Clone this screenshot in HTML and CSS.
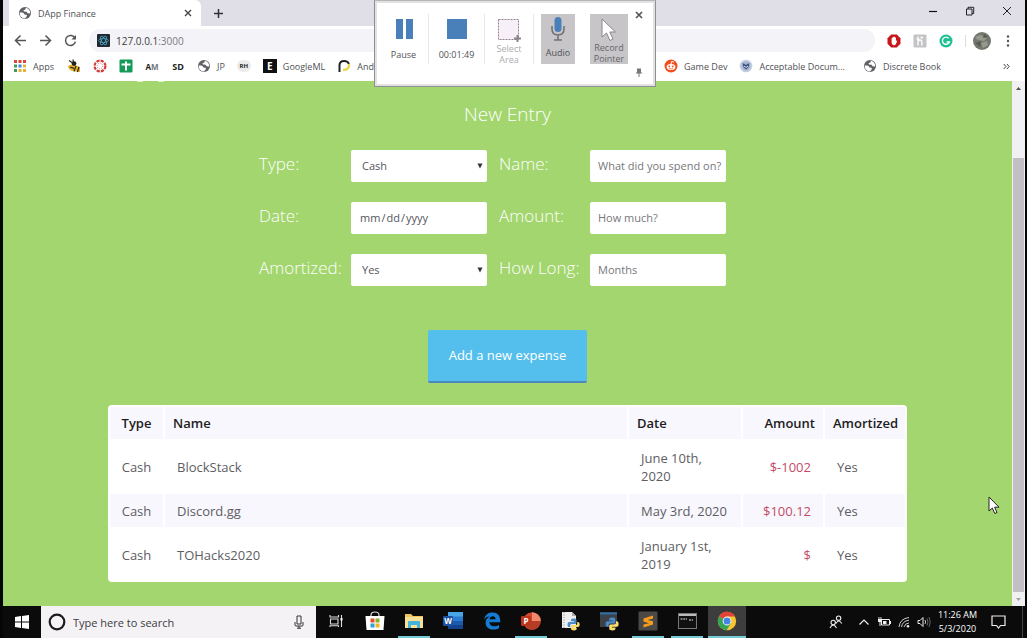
FILE: index.html
```html
<!DOCTYPE html>
<html lang="en">
<head>
    <meta charset="UTF-8">
    <meta name="viewport" content="width=device-width, initial-scale=1">
    <title>DApp Finance</title>
    <link rel="stylesheet" href="styles.css">
</head>
<body>
    <svg class="defs" width="0" height="0">
        <symbol id="globe" viewBox="0 0 14 14">
            <circle cx="7" cy="7" r="6" fill="#5f6166"/>
            <path d="M1.8 6.4 L4.4 6.6 Q6.2 7 6.4 8.6 L8.4 8.8 Q9.4 9.4 8.6 10.6 L7 12.4 C3.6 12.2 1.4 9.6 1.8 6.4Z M7.8 1.8 L7.4 3.4 L5.4 4.2 L6 5.6 L8.6 5.8 L9.6 7.2 L12.2 7.4 C12.4 4.6 10.4 2.2 7.8 1.8Z" fill="#fff"/>
        </symbol>
        <symbol id="python" viewBox="0 0 12 12">
            <path d="M6 0.5 C3.6 .5 3.6 1.6 3.6 3 H6.4 V3.6 H2 C0 3.6 0 8.4 2 8.4 H3 V7 C3 5.8 4 5.6 5 5.6 H7.6 C8.4 5.6 8.8 5 8.8 4 V2 C8.8 .8 7.6 .5 6 .5Z" fill="#4a8cc9"/>
            <path d="M6.4 11.5 C8.8 11.5 9 10.6 9 9 H6 V8.4 H10.2 C12.2 8.4 12.2 3.6 10.2 3.6 H9.4 V5 C9.4 6 8.6 6.4 7.6 6.4 H5 C4 6.4 3.6 7 3.6 8 V9.8 C3.6 11 4.8 11.5 6.4 11.5Z" fill="#fadb6a"/>
        </symbol>
    </svg>

    <div class="desktop">
        <header class="tab-bar">
            <div class="tab">
                <svg width="14" height="14"><use href="#globe"/></svg>
                <span class="tab-title">DApp Finance</span>
                <button class="plain" aria-label="Close tab"><svg width="8" height="8" viewBox="0 0 8 8"><path d="M1 1 L7 7 M7 1 L1 7" stroke="#444" stroke-width="1.4"/></svg></button>
            </div>
            <button class="plain new-tab" aria-label="New tab"><svg width="11" height="11" viewBox="0 0 11 11"><path d="M5.5 1 V10 M1 5.5 H10" stroke="#333" stroke-width="1.5"/></svg></button>
            <div class="window-buttons">
                <button class="plain" aria-label="Minimize"><svg width="10" height="10" viewBox="0 0 10 10"><path d="M1 5.5 H9" stroke="#111" stroke-width="1.2"/></svg></button>
                <button class="plain" aria-label="Restore"><svg width="10" height="10" viewBox="0 0 10 10"><path d="M1.5 3 H7 V9 H1.5Z M3 3 V1.3 H8.7 V7.5 H7" fill="none" stroke="#222"/></svg></button>
                <button class="plain" aria-label="Close"><svg width="10" height="10" viewBox="0 0 10 10"><path d="M1 1 L9 9 M9 1 L1 9" stroke="#222"/></svg></button>
            </div>
        </header>

        <div class="toolbar">
            <button class="plain" aria-label="Back"><svg width="13" height="13" viewBox="0 0 13 13"><path d="M12 6.5 H2 M6.5 1.5 L1.5 6.5 L6.5 11.5" fill="none" stroke="#555" stroke-width="1.5"/></svg></button>
            <button class="plain" aria-label="Forward"><svg width="13" height="13" viewBox="0 0 13 13"><path d="M1 6.5 H11 M6.5 1.5 L11.5 6.5 L6.5 11.5" fill="none" stroke="#555" stroke-width="1.5"/></svg></button>
            <button class="plain" aria-label="Reload"><svg width="13" height="13" viewBox="0 0 13 13"><path d="M11 4.2 A5 5 0 1 0 11.4 7.6" fill="none" stroke="#555" stroke-width="1.5"/><path d="M12 1 V5.6 H7.4Z" fill="#555"/></svg></button>
            <div class="omnibox">
                <svg width="13" height="13" viewBox="0 0 13 13"><rect width="13" height="13" rx="1" fill="#20252e"/><g fill="none" stroke="#4fb4d3" stroke-width=".7"><ellipse cx="6.5" cy="6.5" rx="5" ry="2"/><ellipse cx="6.5" cy="6.5" rx="5" ry="2" transform="rotate(60 6.5 6.5)"/><ellipse cx="6.5" cy="6.5" rx="5" ry="2" transform="rotate(120 6.5 6.5)"/></g></svg>
                <span>127.0.0.1<span class="port">:3000</span></span>
            </div>
            <div class="extensions">
                <svg width="14" height="14" viewBox="0 0 14 14"><path d="M4.2 .5 H9.8 L13.5 4.2 V9.8 L9.8 13.5 H4.2 L.5 9.8 V4.2Z" fill="#c8161d"/><path d="M4.6 6.8 V4.4 Q5 3.8 5.5 4.4 V3.2 Q6 2.6 6.6 3.2 V2.8 Q7.2 2.2 7.7 2.9 V3.6 Q8.4 3 8.9 3.8 V7 L9.8 6.4 Q10.4 6.6 10 7.4 L8.8 10.2 Q8 11.4 6.6 11.2 Q4.6 11 4.6 8.6Z" fill="#fff"/></svg>
                <svg width="14" height="14" viewBox="0 0 14 14"><rect x=".5" y=".5" width="13" height="13" rx="1" fill="#c4c3c6"/><path d="M5 2.5 V11.5 M5 7.5 Q5.6 6 7.2 6 Q8.8 6 8.8 8 V11.5 M3.6 5 H6.4 M8.6 2.6 V4.6 M7.6 3.6 H10" fill="none" stroke="#fff" stroke-width="1.3"/></svg>
                <svg width="14" height="14" viewBox="0 0 14 14"><circle cx="7" cy="7" r="6.5" fill="#1fbf94"/><path d="M9.8 4.4 A3.6 3.6 0 1 0 10.4 8 H7.6" fill="none" stroke="#fff" stroke-width="1.4"/></svg>
                <i class="divider"></i>
                <svg width="18" height="18" viewBox="0 0 18 18"><circle cx="9" cy="9" r="9" fill="#74776d"/><path d="M2 6 Q6 1 10 4 L14 6 L11 9 L5 8Z M8 11 L14 9 L15 13 L10 16Z" fill="#96998e"/><path d="M2 11 L8 9 L7 15Z M11 2 L15 5 L10 6Z" fill="#575c53"/></svg>
                <svg width="4" height="14" viewBox="0 0 4 14" fill="#555"><circle cx="2" cy="2.5" r="1.2"/><circle cx="2" cy="7" r="1.2"/><circle cx="2" cy="11.5" r="1.2"/></svg>
            </div>
        </div>

        <nav class="bookmarks">
            <a href="#" class="apps"><svg width="12" height="12" viewBox="0 0 12 12"><path d="M0 0h3v3h-3z M4.5 0h3v3h-3z M9 0h3v3h-3z" fill="#d9473c"/><path d="M0 4.5h3v3h-3z" fill="#3f9a57"/><path d="M4.5 4.5h3v3h-3z" fill="#4285d8"/><path d="M9 4.5h3v3h-3z M4.5 9h3v3h-3z M9 9h3v3h-3z" fill="#e5b53b"/><path d="M0 9h3v3h-3z" fill="#3f9a57"/></svg>Apps</a>
            <a href="#" aria-label="Bee"><svg width="14" height="14" viewBox="0 0 14 14"><path d="M1 7 Q4 4.5 8 6 L13 8 L13 13 L5 12 Q1 10 1 7Z" fill="#e5b52c"/><path d="M2 1.5 L5 3.4 M6 .5 L6.4 3 M3 8 L7 9.4 M9 7 L7 12.4 M12 8 L10.4 13" fill="none" stroke="#26221a" stroke-width="1.2"/><circle cx="7" cy="4.6" r="2.4" fill="#26221a"/></svg></a>
            <a href="#" aria-label="Canvas"><svg width="14" height="14" viewBox="0 0 14 14"><circle cx="7" cy="7" r="5.4" fill="none" stroke="#cf3d3d" stroke-width="2.2" stroke-dasharray="3.2 1.04"/><circle cx="7" cy="7" r="2.8" fill="none" stroke="#cf3d3d" stroke-width=".8" stroke-dasharray=".9 1.3"/></svg></a>
            <a href="#" aria-label="Sheets"><svg width="14" height="14" viewBox="0 0 14 14"><rect x=".5" y=".5" width="13" height="13" rx="1" fill="#159b57"/><path d="M7 2.5 V11.5 M2.5 5.5 H11.5" stroke="#fff" stroke-width="2"/></svg></a>
            <a href="#" class="letters am">A<span>M</span></a>
            <a href="#" class="letters sd">SD</a>
            <a href="#"><svg width="14" height="14"><use href="#globe"/></svg>JP</a>
            <a href="#" class="letters rh">RH</a>
            <a href="#"><span class="e-logo">E</span>GoogleML</a>
            <a href="#"><svg width="14" height="14" viewBox="0 0 14 14"><path d="M2.5 13 V6 Q2.8 2 7 2 Q11 2 11.8 5" fill="none" stroke="#222" stroke-width="2"/><path d="M12 5 Q12.6 10.6 6 11" fill="none" stroke="#ead84b" stroke-width="2.4"/></svg>Android</a>
            <div class="bookmarks-right">
                <a href="#"><svg width="14" height="14" viewBox="0 0 14 14"><circle cx="7" cy="7" r="6.5" fill="#f24d1c"/><ellipse cx="7" cy="8" rx="4.4" ry="3" fill="#fff"/><circle cx="5.3" cy="7.4" r=".9" fill="#f24d1c"/><circle cx="8.7" cy="7.4" r=".9" fill="#f24d1c"/><path d="M7 5 L7.6 2.5 L10 3" fill="none" stroke="#fff"/><path d="M5.2 9.3 Q7 10.6 8.8 9.3" fill="none" stroke="#f24d1c" stroke-width=".7"/></svg>Game Dev</a>
                <a href="#"><svg width="14" height="14" viewBox="0 0 14 14"><circle cx="7" cy="7" r="6.3" fill="#c3cde0"/><circle cx="7" cy="7" r="4.4" fill="#a3b2cf"/><path d="M3.5 4 L7 6 L10.5 4 L9.5 8 L7 10.5 L4.5 8Z" fill="#35507c"/><path d="M5 7 L7 8.5 L9 7" fill="none" stroke="#dfe5f0"/></svg>Acceptable Docum...</a>
                <a href="#" class="discrete"><svg width="14" height="14"><use href="#globe"/></svg>Discrete Book</a>
                <button class="plain" aria-label="More bookmarks"><svg width="7" height="7" viewBox="0 0 7 7"><path d="M.7 1 L3 3.5 L.7 6 M3.9 1 L6.2 3.5 L3.9 6" fill="none" stroke="#444"/></svg></button>
            </div>
        </nav>

        <div class="viewport">
            <main class="page">
                <div class="scrolled-line"><i></i><i></i></div>
                <h1>New Entry</h1>
                <form>
                    <div class="fields">
                        <label for="type">Type:</label>
                        <select id="type"><option>Cash</option><option>Credit</option></select>
                        <label for="name">Name:</label>
                        <input id="name" type="text" placeholder="What did you spend on?">
                        <label for="date">Date:</label>
                        <input id="date" type="date">
                        <label for="amount">Amount:</label>
                        <input id="amount" type="text" placeholder="How much?">
                        <label for="amortized">Amortized:</label>
                        <select id="amortized"><option>Yes</option><option>No</option></select>
                        <label for="months">How Long:</label>
                        <input id="months" type="text" placeholder="Months">
                    </div>
                    <button type="button" class="add">Add a new expense</button>
                </form>
                <table>
                    <thead>
                        <tr>
                            <th class="type">Type</th>
                            <th class="name">Name</th>
                            <th class="date">Date</th>
                            <th class="amount">Amount</th>
                            <th class="amortized">Amortized</th>
                        </tr>
                    </thead>
                    <tbody>
                        <tr><td class="type">Cash</td><td>BlockStack</td><td>June 10th, 2020</td><td class="amount">$-1002</td><td>Yes</td></tr>
                        <tr><td class="type">Cash</td><td>Discord.gg</td><td>May 3rd, 2020</td><td class="amount">$100.12</td><td>Yes</td></tr>
                        <tr><td class="type">Cash</td><td>TOHacks2020</td><td>January 1st, 2019</td><td class="amount">$</td><td>Yes</td></tr>
                    </tbody>
                </table>
            </main>
            <div class="scrollbar">
                <svg width="13" height="15" viewBox="0 0 13 15"><path d="M4 9 L6.5 6 L9 9Z" fill="#505050"/></svg>
                <div class="track"><div class="thumb"></div></div>
                <svg width="13" height="14" viewBox="0 0 13 14"><path d="M4 6 H9 L6.5 9Z" fill="#a3a3a3"/></svg>
            </div>
        </div>

        <footer class="taskbar">
            <button class="plain start" aria-label="Start"><svg width="14" height="14" viewBox="0 0 14 14"><path d="M0 2 L6 1 V6.5 H0Z M7 .9 L14 0 V6.5 H7Z M0 7.4 H6 V13 L0 12Z M7 7.4 H14 V14 L7 13.1Z" fill="#fff"/></svg></button>
            <div class="search">
                <svg width="18" height="18" viewBox="0 0 18 18"><circle cx="9" cy="9" r="7.3" fill="none" stroke="#1b1b1b" stroke-width="2.2"/></svg>
                <input type="text" aria-label="Search" placeholder="Type here to search">
                <svg width="10" height="14" viewBox="0 0 10 14"><path d="M3 1 H7 V9 H3Z M1 7 V10 Q1 11 2 11 H8 Q9 11 9 10 V7 M5 11 V13.5 M3 13.2 H7" fill="none" stroke="#333"/></svg>
            </div>
            <div class="tasks">
                <button class="plain" aria-label="Task view"><svg width="14" height="14" viewBox="0 0 14 14"><path d="M1 1 V3 H9.5 V1 M1.5 5 H9 V10 H1.5Z M1 13 V11.8 H9.5 V13 M12.5 1 V13" fill="none" stroke="#ddd" stroke-width="1.1"/><path d="M11.5 4 H13.5 V6.5 H11.5Z" fill="#fff"/></svg></button>
                <button class="plain" aria-label="Store"><svg width="20" height="20" viewBox="0 0 20 20"><path d="M6 6 V4 Q6 1 10 1 Q14 1 14 4 V6" fill="none" stroke="#ddd" stroke-width="1.2"/><path d="M.5 5 H19.5 L18.5 19 H1.5Z" fill="#fff"/><path d="M5.5 7.5 h4v4h-4z" fill="#e74c2c"/><path d="M10.5 7.5 h4v4h-4z" fill="#7db52c"/><path d="M5.5 12.5 h4v4h-4z" fill="#28a3dd"/><path d="M10.5 12.5 h4v4h-4z" fill="#f5b61f"/></svg></button>
                <button class="plain open" aria-label="Explorer"><svg width="20" height="20" viewBox="0 0 20 20"><path d="M1 3 H7 L9 5 H19 V17 H1Z" fill="#eec65d"/><path d="M1 6 H19 V17 H1Z" fill="#fae096"/><path d="M4 17 V11 Q4 10 5 10 H15 Q16 10 16 11 V17 H13 V14 H7 V17Z" fill="#46b3dc"/></svg></button>
                <button class="plain" aria-label="Word"><svg width="20" height="20" viewBox="0 0 20 20"><rect x="5" y="1" width="15" height="17" rx="1" fill="#2d7bd0"/><path d="M5 1 H20 V5.5 H5Z" fill="#46a6e8"/><path d="M5 10 H20 V14 H5Z" fill="#1b59ad"/><path d="M5 14 H20 V18 H5Z" fill="#15428c"/><rect y="5" width="10" height="10" rx="1" fill="#1c50a0"/><text x="5" y="13" class="logo-letter">W</text></svg></button>
                <button class="plain" aria-label="Edge"><svg width="18" height="18" viewBox="0 0 18 18"><path d="M1 8 C2 2 6 .5 9.5 .5 C14.5 .5 17.2 4 17.2 8 V10.2 H6.4 C6.5 13 8.6 14.2 11 14.2 C13 14.2 14.6 13.7 16 12.9 V16.3 C14.4 17.2 12.6 17.6 10.6 17.6 C5.6 17.6 2.6 14.8 2.6 10.7 C2.6 7.8 4.4 5.4 6.7 4.6 C4.2 4.5 2.2 5.7 1 8Z M6.5 7.3 H12.6 C12.5 5.2 11.5 4.2 9.8 4.2 C8 4.2 6.9 5.4 6.5 7.3Z" fill="#147bd1" fill-rule="evenodd"/></svg></button>
                <button class="plain open" aria-label="PowerPoint"><svg width="20" height="20" viewBox="0 0 20 20"><circle cx="11" cy="10" r="8.7" fill="#d14a30"/><path d="M11 1.3 A8.7 8.7 0 0 1 19.7 10 H11Z" fill="#f1886b"/><path d="M3.4 14.3 A8.7 8.7 0 0 0 19.7 10 H11Z" fill="#b53d27"/><rect y="5" width="10" height="10" rx="1" fill="#bb351c"/><text x="5" y="13" class="logo-letter">P</text></svg></button>
                <button class="plain" aria-label="Python file"><svg width="20" height="20" viewBox="0 0 20 20"><path d="M2 1 H12 L16 5 V17 H2Z" fill="#eee"/><path d="M4 1 V17" stroke="#888" stroke-dasharray="1 1.5"/><path d="M12 1 L16 5 H12Z" fill="#aaa"/><use href="#python" x="7" y="7" width="13" height="13"/></svg></button>
                <button class="plain" aria-label="Python console"><svg width="20" height="20" viewBox="0 0 20 20"><rect x="1" y="1" width="17" height="15" fill="#3c4147"/><path d="M1 2.5 H18" stroke="#2f6fa7" stroke-width="2"/><use href="#python" x="6" y="6" width="14" height="14"/></svg></button>
                <button class="plain open" aria-label="Sublime Text"><svg width="20" height="20" viewBox="0 0 20 20"><rect x=".5" y=".5" width="19" height="19" rx="1" fill="#4b4947"/><path d="M15 4.5 L5.5 7.4 V10.6 L11 12.2 L5.5 13.5 V16.6 L15 13.5 V10.3 L9.6 8.9 L15 7.5Z" fill="#f79b1d"/></svg></button>
                <button class="plain open" aria-label="Command Prompt"><svg width="19" height="16" viewBox="0 0 19 16"><rect x=".5" y=".5" width="18" height="15" fill="#111" stroke="#777"/><path d="M1 2 H18" stroke="#bbb" stroke-width="2"/><path d="M2.5 6 H9 M11 7 H15" stroke="#ddd" stroke-width="1.2" stroke-dasharray="2 .7"/></svg></button>
                <button class="plain open current" aria-label="Chrome"><svg width="20" height="20" viewBox="0 0 20 20"><circle cx="10" cy="10" r="9.2" fill="#f7c630"/><path d="M10 10 L2 5.4 A9.2 9.2 0 0 1 18 5.4 H10Z" fill="#e14436"/><path d="M10 10 L2 5.4 A9.2 9.2 0 0 0 9.6 19.2 L14 12Z" fill="#36a454"/><circle cx="10" cy="10" r="4.4" fill="#fff"/><circle cx="10" cy="10" r="3.5" fill="#4384e8"/></svg></button>
            </div>
            <div class="tray">
                <svg class="people" width="14" height="14" viewBox="0 0 14 14"><g fill="none" stroke="#eee" stroke-width="1.1"><circle cx="9.6" cy="3.2" r="2.2"/><path d="M7 8.5 Q9.6 3.5 12.8 8.5"/><circle cx="4.2" cy="7.5" r="2.2"/><path d="M1 13 Q4.2 7 7.5 13"/></g></svg>
                <svg width="12" height="12" viewBox="0 0 12 12"><path d="M1.5 8.5 L6 4 L10.5 8.5" fill="none" stroke="#eee" stroke-width="1.2"/></svg>
                <svg width="14" height="12" viewBox="0 0 14 12"><path d="M4.5 3.5 H12.5 V9 H4.5Z" fill="none" stroke="#eee"/><path d="M6 5 H9.5 V8 H6Z M13 5 H14 V8 H13Z M1 3 H5 V6 H1Z M1.5 1 H2.4 V3 H1.5Z M3.5 1 H4.4 V3 H3.5Z" fill="#eee"/><path d="M3 6 V10" stroke="#eee"/></svg>
                <svg width="12" height="12" viewBox="0 0 12 12"><g fill="none" stroke="#ccc"><path d="M1 11 Q2 2.5 11 1.5"/><path d="M3.5 11 Q4.3 5 11 4.2"/><path d="M6 11 Q6.8 7.4 11 7"/></g><circle cx="10" cy="10.2" r="1.3" fill="#eee"/></svg>
                <svg width="14" height="12" viewBox="0 0 14 12"><path d="M1 4.5 H3 L6 1.5 V10.5 L3 7.5 H1Z" fill="none" stroke="#eee"/><path d="M8 4 Q9.2 6 8 8" fill="none" stroke="#ccc"/><path d="M10 2.5 Q12 6 10 9.5 M12 1 Q14.6 6 12 11" fill="none" stroke="#666"/></svg>
                <div class="clock"><span>11:26 AM</span><span>5/3/2020</span></div>
                <svg width="15" height="14" viewBox="0 0 15 14"><path d="M1 1 H14 V10.5 H9.5 L7.5 13 L5.5 10.5 H1Z" fill="none" stroke="#eee" stroke-width="1.2"/></svg>
                <i class="peek"></i>
            </div>
        </footer>
    </div>

    <!-- screen recorder docked over the browser -->
    <div class="recorder">
        <button class="plain pause"><svg width="20" height="22" viewBox="0 0 20 22"><path d="M2 1 H9 V21 H2Z M12 1 H19 V21 H12Z" fill="#4a80ba"/></svg>Pause</button>
        <button class="plain stop"><svg width="22" height="22" viewBox="0 0 22 22"><path d="M1 1 H21 V21 H1Z" fill="#4a80ba"/></svg>00:01:49</button>
        <button class="plain area"><svg width="24" height="24" viewBox="0 0 24 24"><rect x="1.5" y="1.5" width="20" height="20" fill="#f8f0f9" stroke="#94838f" stroke-dasharray="2 1"/><path d="M20.5 17 V24 M17 20.5 H24" stroke="#8a858a" stroke-width="2"/></svg>Select<br>Area</button>
        <button class="plain audio"><svg width="16" height="26" viewBox="0 0 16 26"><rect x="4.5" y="1" width="7" height="15" rx="3.5" fill="#4a80ba"/><path d="M2 10 V13 Q2 19 8 19 Q14 19 14 13 V10 M8 19 V24 M4 24 H12" fill="none" stroke="#707378" stroke-width="1.6"/></svg>Audio</button>
        <button class="plain pointer"><svg width="18" height="24" viewBox="0 0 18 24"><path d="M2 1 V19 L6.5 15 L10 22.5 L13 21 L9.8 14 H15.5Z" fill="#fff" stroke="#888"/></svg>Record<br>Pointer</button>
        <div class="recorder-side">
            <button class="plain" aria-label="Close recorder"><svg width="8" height="8" viewBox="0 0 8 8"><path d="M1 1 L7 7 M7 1 L1 7" stroke="#555" stroke-width="1.7"/></svg></button>
            <button class="plain" aria-label="Pin"><svg width="8" height="9" viewBox="0 0 8 9"><path d="M2 .5 H6 V4 L7.5 5.5 H.5 L2 4Z" fill="#777"/><path d="M4 5 V9" stroke="#777"/></svg></button>
        </div>
    </div>

    <svg class="cursor" width="12" height="19" viewBox="0 0 12 19"><path d="M1 1 V15 L4.3 12 L6.8 17.5 L9 16.5 L6.6 11.2 H11Z" fill="#fff" stroke="#222"/></svg>
</body>
</html>
```
FILE: styles.css
```css
* {
    box-sizing: border-box;
}

body {
    margin: 0;
    padding-bottom: 6px;
    height: 100vh;
    background: white;
    font-family: "Open Sans", "Noto Sans", sans-serif;
    font-size: 9px;
    color: #505156;
    overflow: hidden;
}

svg {
    display: block;
    flex: none;
}

.defs {
    position: absolute;
}

.plain {
    border: none;
    padding: 0;
    background: none;
    font: inherit;
    color: inherit;
}

.desktop {
    height: 100%;
    padding: 0 2px 0 3px;
    background: #060606;
    display: flex;
    flex-direction: column;
}

/* browser chrome */
.tab-bar {
    height: 26px;
    background: #e0dee7;
    display: flex;
    align-items: center;
    padding: 0 13px 0 6px;
}

.tab {
    width: 192px;
    height: 26px;
    background: white;
    border-radius: 0 6px 0 0;
    display: flex;
    align-items: center;
    gap: 6px;
    padding: 0 9px;
}

.tab-title {
    flex: 1;
}

.new-tab {
    margin-left: 12px;
}

.window-buttons {
    margin-left: auto;
    display: flex;
    gap: 27px;
    padding-bottom: 5px;
}

.toolbar {
    height: 29px;
    background: white;
    display: flex;
    align-items: center;
    gap: 12px;
    padding: 0 15px 0 11px;
}

.omnibox {
    flex: 1;
    height: 23px;
    border-radius: 12px;
    background: #f4f3f8;
    display: flex;
    align-items: center;
    gap: 6px;
    padding: 0 8px;
    font-size: 10px;
    color: #3c3d42;
}

.port {
    color: #7b7b80;
}

.extensions {
    display: flex;
    align-items: center;
    gap: 12px;
}

.extensions svg:last-child {
    margin-left: 3px;
}

.divider {
    width: 1px;
    height: 12px;
    margin-right: -5px;
    background: #ddd;
}

.bookmarks {
    height: 26px;
    background: white;
    display: flex;
    align-items: center;
    gap: 12px;
    padding: 0 15px 4px 11px;
}

.bookmarks a {
    display: flex;
    align-items: center;
    gap: 6px;
    color: inherit;
    text-decoration: none;
    white-space: nowrap;
}

.bookmarks .apps {
    gap: 7px;
    margin-right: 1px;
}

.bookmarks .letters {
    width: 14px;
    gap: 0;
    justify-content: center;
    font-weight: bold;
    color: #222;
}

.bookmarks .am {
    font-size: 8px;
}

.am span {
    color: #777;
}

.bookmarks .rh {
    font-size: 6px;
    height: 12px;
    border-radius: 6px;
    background: #ececec;
}

.e-logo {
    width: 14px;
    height: 14px;
    background: #111;
    color: white;
    font-size: 10px;
    font-weight: bold;
    line-height: 14px;
    text-align: center;
}

.bookmarks-right {
    margin-left: auto;
    display: flex;
    align-items: center;
    gap: 12px;
}

.discrete {
    margin: 0 50px 0 6px;
}

/* page */
.viewport {
    flex: 1;
    min-height: 0;
    display: flex;
}

.page {
    flex: 1;
    background: #a3d66e;
    padding: 0 105px;
    overflow: hidden;
}

.scrolled-line {
    display: flex;
    gap: 15px;
    padding-left: 29px;
}

.scrolled-line i {
    width: 6px;
    height: 1px;
    background: #def0cb;
}

.page h1 {
    margin: 18px 0 22px;
    font-size: 19px;
    font-weight: 300;
    line-height: 28px;
    text-align: center;
    color: white;
}

.page form {
    display: flex;
    flex-direction: column;
    align-items: center;
}

.fields {
    display: grid;
    grid-template-columns: 80px 136px 79px 136px;
    gap: 20px 12px;
    align-items: center;
    margin-right: 30px;
}

.fields label {
    font-size: 17px;
    font-weight: 300;
    line-height: 24px;
    padding-bottom: 4px;
    color: white;
    white-space: nowrap;
}

.fields input,
.fields select {
    width: 100%;
    height: 32px;
    border: none;
    border-radius: 2px;
    background: white;
    padding: 0 4px 1px 8px;
    font-family: inherit;
    font-size: 11px;
    color: #55555c;
}

.fields input::placeholder {
    color: #77777c;
}

.fields input::-webkit-calendar-picker-indicator {
    display: none;
}

.fields select {
    appearance: none;
    padding: 0 11px 1px;
    background: white url("data:image/svg+xml,%3Csvg xmlns='http://www.w3.org/2000/svg' width='6' height='6'%3E%3Cpath d='M0.5 0.5H5.5L3 5.5Z' fill='%23333'/%3E%3C/svg%3E") no-repeat right 4px center;
}

.add {
    margin: 44px 0 22px;
    padding: 0 21px 2px;
    height: 53px;
    border: none;
    border-bottom: 2px solid #4b88c0;
    border-radius: 2px;
    background: #54bfec;
    font-family: inherit;
    font-size: 13px;
    color: white;
}

table {
    width: 100%;
    table-layout: fixed;
    background: white;
    border-radius: 4px;
    border-spacing: 2px;
    font-size: 13px;
    line-height: 18px;
}

th {
    padding: 7px 8px;
    background: #f8f7fd;
    font-weight: 600;
    color: #1c1c22;
    text-align: left;
}

td {
    padding: 8px 12px 7px;
    color: #5d5d63;
}

tbody tr:nth-child(even) td {
    background: #f8f7fd;
}

th.type {
    width: 53px;
}

th.date {
    width: 112px;
}

th.amount,
th.amortized {
    width: 80px;
}

table .type {
    padding-left: 0;
    padding-right: 0;
    text-align: center;
}

table .amount {
    text-align: right;
}

td.amount {
    color: #c24b66;
}

.scrollbar {
    width: 13px;
    background: #f1f0f3;
    display: flex;
    flex-direction: column;
}

.track {
    flex: 1;
    display: flex;
    flex-direction: column;
    justify-content: flex-end;
    padding: 0 1px;
}

.thumb {
    height: 87.5%;
    background: #c2c0c4;
}

/* taskbar */
.taskbar {
    height: 32px;
    background: #0b0b0b;
    display: flex;
}

.start {
    width: 38px;
    display: flex;
    align-items: center;
    justify-content: center;
}

.search {
    width: 275px;
    background: #f4f2f5;
    display: flex;
    align-items: center;
    gap: 7px;
    padding: 0 12px 0 7px;
}

.search input {
    flex: 1;
    min-width: 0;
    border: none;
    padding: 0;
    background: none;
    font-family: inherit;
    font-size: 11px;
}

.search input::placeholder {
    color: #3c3c3f;
}

.tasks {
    display: flex;
    gap: 7px;
    padding: 0 4px;
}

.tasks button {
    width: 32px;
    display: flex;
    align-items: center;
    justify-content: center;
    border-bottom: 2px solid transparent;
}

.tasks .open {
    border-bottom-color: #74cbd6;
}

.tasks .current {
    width: 38px;
    margin-left: -2px;
    background: #3d3d3d;
}

.logo-letter {
    font-size: 8px;
    font-weight: bold;
    fill: white;
    text-anchor: middle;
}

.tray {
    margin-left: auto;
    display: flex;
    align-items: center;
    gap: 7px;
    padding-right: 2px;
}

.people {
    margin-right: 8px;
}

.clock {
    display: flex;
    flex-direction: column;
    align-items: center;
    margin-right: 7px;
    line-height: 14px;
    color: white;
}

.peek {
    width: 1px;
    height: 32px;
    margin-left: 9px;
    background: #444;
}

/* floating windows */
.recorder {
    position: absolute;
    top: 0;
    left: 374px;
    width: 282px;
    height: 87px;
    padding: 13px 12px 0 8px;
    background: white;
    border: 1px solid #8f8e90;
    border-top-color: #b5b4b6;
    box-shadow: inset 0 0 0 2px #e2e1e3;
    display: flex;
    align-items: flex-start;
}

.recorder > button {
    display: flex;
    flex-direction: column;
    align-items: center;
    height: 50px;
    line-height: 11px;
}

.recorder .pause {
    width: 46px;
    padding: 4px 4px 0 0;
    gap: 9px;
    border-right: 1px solid #e8e7ea;
}

.recorder .stop {
    width: 56px;
    padding-top: 4px;
    gap: 9px;
    border-right: 1px solid #e8e7ea;
}

.recorder .area {
    width: 49px;
    padding-top: 4px;
    gap: 1px;
    color: #adacb0;
    border-right: 1px solid #e8e7ea;
}

.recorder .audio {
    width: 34px;
    margin: 0 7px;
    padding-top: 2px;
    gap: 5px;
    background: #c7c5c8;
}

.recorder .pointer {
    width: 38px;
    margin-left: 8px;
    padding-top: 4px;
    background: #c7c5c8;
    color: #66666b;
}

.recorder-side {
    margin-left: auto;
    height: 66px;
    display: flex;
    flex-direction: column;
    justify-content: space-between;
    margin-top: -3px;
}

.cursor {
    position: absolute;
    left: 988px;
    top: 496px;
}
```
